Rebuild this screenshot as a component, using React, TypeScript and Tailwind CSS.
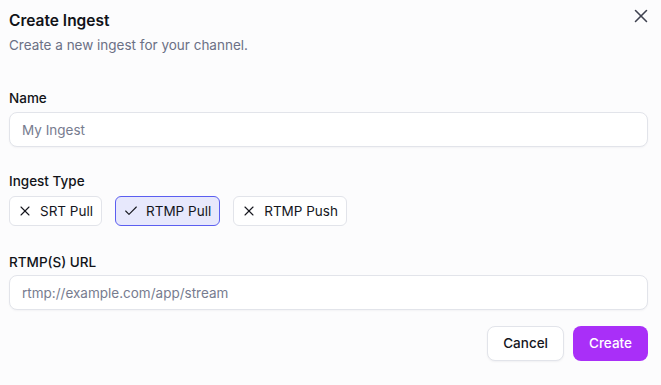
import React, { useState } from "react";
import { X, Check } from "lucide-react";

const types = ["SRT Pull", "RTMP Pull", "RTMP Push"];

const inputClass =
  "h-[35px] w-full rounded-lg border border-[#e2e4ea] bg-white px-[12px] text-[13.5px] text-[#111318] placeholder:text-[#777c8f] shadow-[0_1px_2px_rgba(16,24,40,0.04)] outline-none";

export default function App() {
  const [selected, setSelected] = useState("RTMP Pull");

  return (
    <div className="relative w-[661px] h-[385px] bg-[#fcfcfd] font-['Inter',sans-serif] text-[#111318] pl-[9px] pr-[13px] pt-[9px] flex flex-col overflow-hidden">
      <button className="absolute top-[4.5px] right-[9.5px] text-[#3f4250]">
        <X size={22} strokeWidth={1.7} />
      </button>

      <h2 className="text-[15.5px] leading-6 font-semibold">Create Ingest</h2>
      <p className="mt-[2px] text-[13.5px] leading-5 text-[#6b7085]">
        Create a new ingest for your channel.
      </p>

      <label className="mt-[33px] text-[13.5px] leading-5 font-medium">Name</label>
      <input className={`mt-[4px] ${inputClass}`} placeholder="My Ingest" />

      <label className="mt-[24px] text-[13.5px] leading-5 font-medium">Ingest Type</label>
      <div className="mt-[5px] flex gap-[13px]">
        {types.map((t) => {
          const on = t === selected;
          return (
            <button
              key={t}
              onClick={() => setSelected(t)}
              className={
                on
                  ? "h-[30px] flex items-center gap-[7px] pl-[7px] pr-[8px] rounded-md border border-[#5b5ef0] bg-[#e7e8fc] text-[13.5px] text-[#15161d]"
                  : "h-[30px] flex items-center gap-[7px] pl-[7px] pr-[8px] rounded-md border border-[#e2e4ea] bg-white text-[13.5px] text-[#15161d]"
              }
            >
              {on ? <Check size={16} strokeWidth={1.6} /> : <X size={16} strokeWidth={1.6} />}
              {t}
            </button>
          );
        })}
      </div>

      <label className="mt-[26px] text-[13.5px] leading-5 font-medium">RTMP(S) URL</label>
      <input className={`mt-[3px] ${inputClass}`} placeholder="rtmp://example.com/app/stream" />

      <div className="mt-[16px] flex justify-end gap-[9px]">
        <button className="h-[35px] px-[15px] rounded-lg border border-[#e2e4ea] bg-white text-[13.5px] font-medium text-[#15161d] shadow-[0_1px_2px_rgba(16,24,40,0.05)]">
          Cancel
        </button>
        <button className="h-[35px] px-4 rounded-lg bg-[#a92ff8] text-[13.5px] font-medium text-white">
          Create
        </button>
      </div>
    </div>
  );
}
